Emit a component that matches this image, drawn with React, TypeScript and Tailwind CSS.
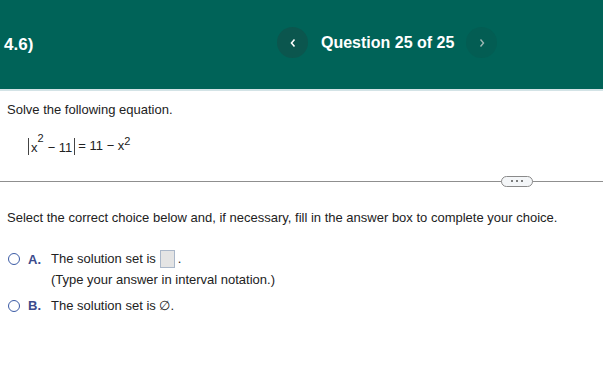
import React from "react";

export default function App() {
  return (
    <div className="w-[603px] h-[371px] bg-white overflow-hidden" style={{ fontFamily: '"Liberation Sans", Arial, sans-serif' }}>
      <div className="h-[89px] bg-[#006358] flex items-center relative">
        <div className="pl-[4px] text-white font-bold text-[17px]">4.6)</div>
        <div className="absolute left-[277px] top-[27px] flex items-center">
          <div className="w-[31px] h-[31px] rounded-full bg-[#0b564e] flex items-center justify-center">
            <svg width="8" height="10" viewBox="0 0 8 10"><path d="M5.5 1.5 L2.5 5 L5.5 8.5" fill="none" stroke="white" strokeWidth="1.6" /></svg>
          </div>
          <div className="ml-[13px] text-white font-bold text-[16px]">Question 25 of 25</div>
          <div className="ml-[12px] w-[31px] h-[31px] rounded-full bg-[#035d53] flex items-center justify-center">
            <svg width="8" height="10" viewBox="0 0 8 10"><path d="M2.5 1.5 L5.5 5 L2.5 8.5" fill="none" stroke="#9fb8b4" strokeWidth="1.4" /></svg>
          </div>
        </div>
      </div>
      <div className="h-[2px] bg-[#d3e3e6]" />
      <div className="pl-[7px] pt-[9px] text-[13px] text-[#222]">Solve the following equation.</div>
      <div className="pl-[28px] pt-[18px] text-[13px] text-[#222] flex items-end h-[35px]">
        <span className="inline-flex items-end border-l border-r border-[#444] h-[17px] px-[2px] leading-[15px]">
          <span>x</span>
          <span className="text-[11px] relative top-[-9px]">2</span>
          <span className="ml-[4px]">−&nbsp;11</span>
        </span>
        <span className="ml-[3px] leading-[15px] pb-[2px]">= 11 −&nbsp;x</span>
        <span className="text-[11px] self-start mt-[-2px] leading-[11px]">2</span>
      </div>
      <div className="mt-[21px] relative h-[11px] flex items-center">
        <div className="w-full h-px bg-[#8f8f8f]" />
        <div className="absolute left-[501px] top-0 w-[32px] h-[11px] rounded-full border border-[#8a8a8a] bg-[#f4f6f8] flex items-center justify-center gap-[3px]">
          <span className="w-[2px] h-[2px] bg-[#555] rounded-full" />
          <span className="w-[2px] h-[2px] bg-[#555] rounded-full" />
          <span className="w-[2px] h-[2px] bg-[#555] rounded-full" />
        </div>
      </div>
      <div className="pl-[7px] pt-[21px] text-[13px] text-[#222]">
        Select the correct choice below and, if necessary, fill in the answer box to complete your choice.
      </div>
      <div className="pl-[8px] pt-[22px] text-[13px] text-[#222]">
        <div className="flex items-start">
          <span className="mt-[4px] w-[12px] h-[12px] rounded-full border border-[#3b5ba5] shrink-0" />
          <span className="ml-[8px] font-bold text-[#3c4b8c] w-[23px] mt-[1px]">A.</span>
          <div>
            <div className="flex items-center">
              <span>The solution set is</span>
              <span className="ml-[4px] w-[15px] h-[18px] bg-[#e4e4e4] border border-[#aab7c9]" />
              <span className="ml-[3px]">.</span>
            </div>
            <div className="mt-[1px]">(Type your answer in interval notation.)</div>
          </div>
        </div>
        <div className="flex items-start mt-[7px]">
          <span className="mt-[4px] w-[12px] h-[12px] rounded-full border border-[#3b5ba5] shrink-0" />
          <span className="ml-[8px] font-bold text-[#3c4b8c] w-[23px]">B.</span>
          <span>The solution set is ∅.</span>
        </div>
      </div>
    </div>
  );
}
